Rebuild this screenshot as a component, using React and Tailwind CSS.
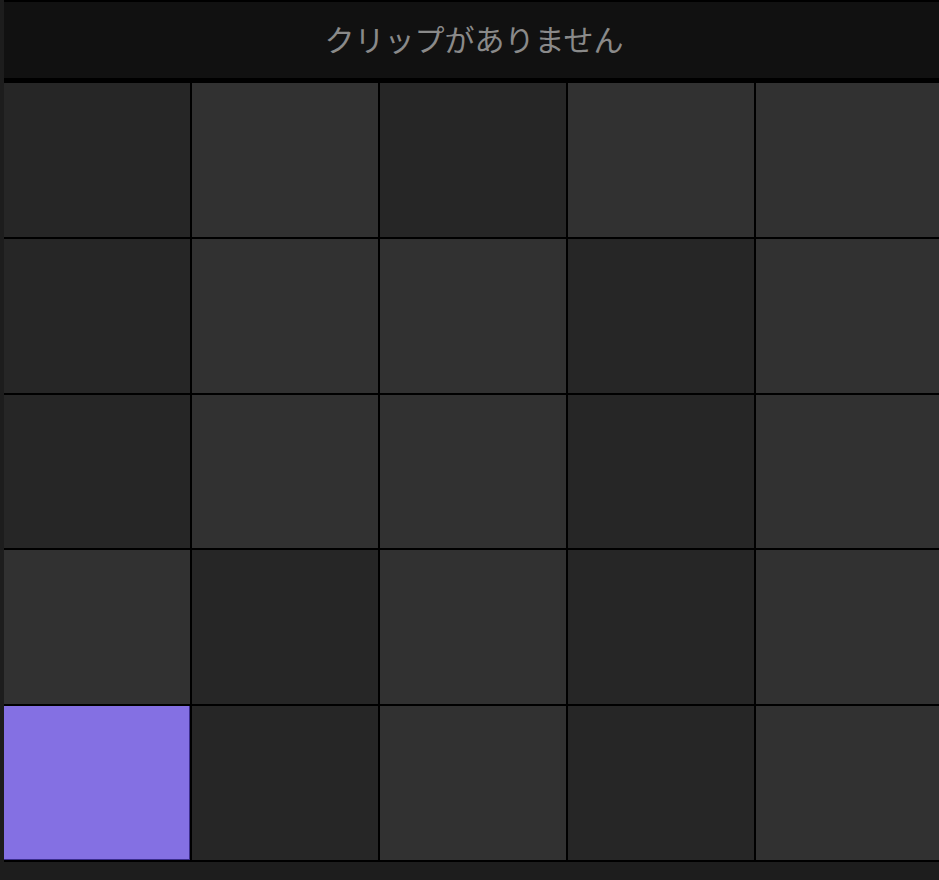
export default function App() {
  const cells = [
    "d", "l", "d", "l", "l",
    "d", "l", "l", "d", "l",
    "d", "l", "l", "d", "l",
    "l", "d", "l", "d", "l",
    "p", "d", "l", "d", "l",
  ];
  const cls = {
    d: "bg-[#262626]",
    l: "bg-[#313131]",
    p: "bg-[#8470e3] border-r border-b border-[#3a2c8c]",
  };
  return (
    <div className="w-[939px] h-[880px] overflow-hidden bg-[#1d1d1d] pl-[4px]">
      <div className="w-[940px] bg-black pt-[2px] pb-[2px]">
        <div
          className="h-[76px] pb-[3px] bg-[#111111] flex items-center justify-center text-[#8a8a8a] text-[30px]"
          style={{ fontFamily: '"Noto Sans CJK JP", "Noto Sans", sans-serif' }}
        >
          クリップがありません
        </div>
        <div className="h-[5px]" />
        <div className="grid grid-cols-[repeat(5,186px)] grid-rows-5 gap-[2px] h-[777px]">
          {cells.map((c, i) => (
            <div key={i} className={cls[c]} />
          ))}
        </div>
      </div>
    </div>
  );
}
